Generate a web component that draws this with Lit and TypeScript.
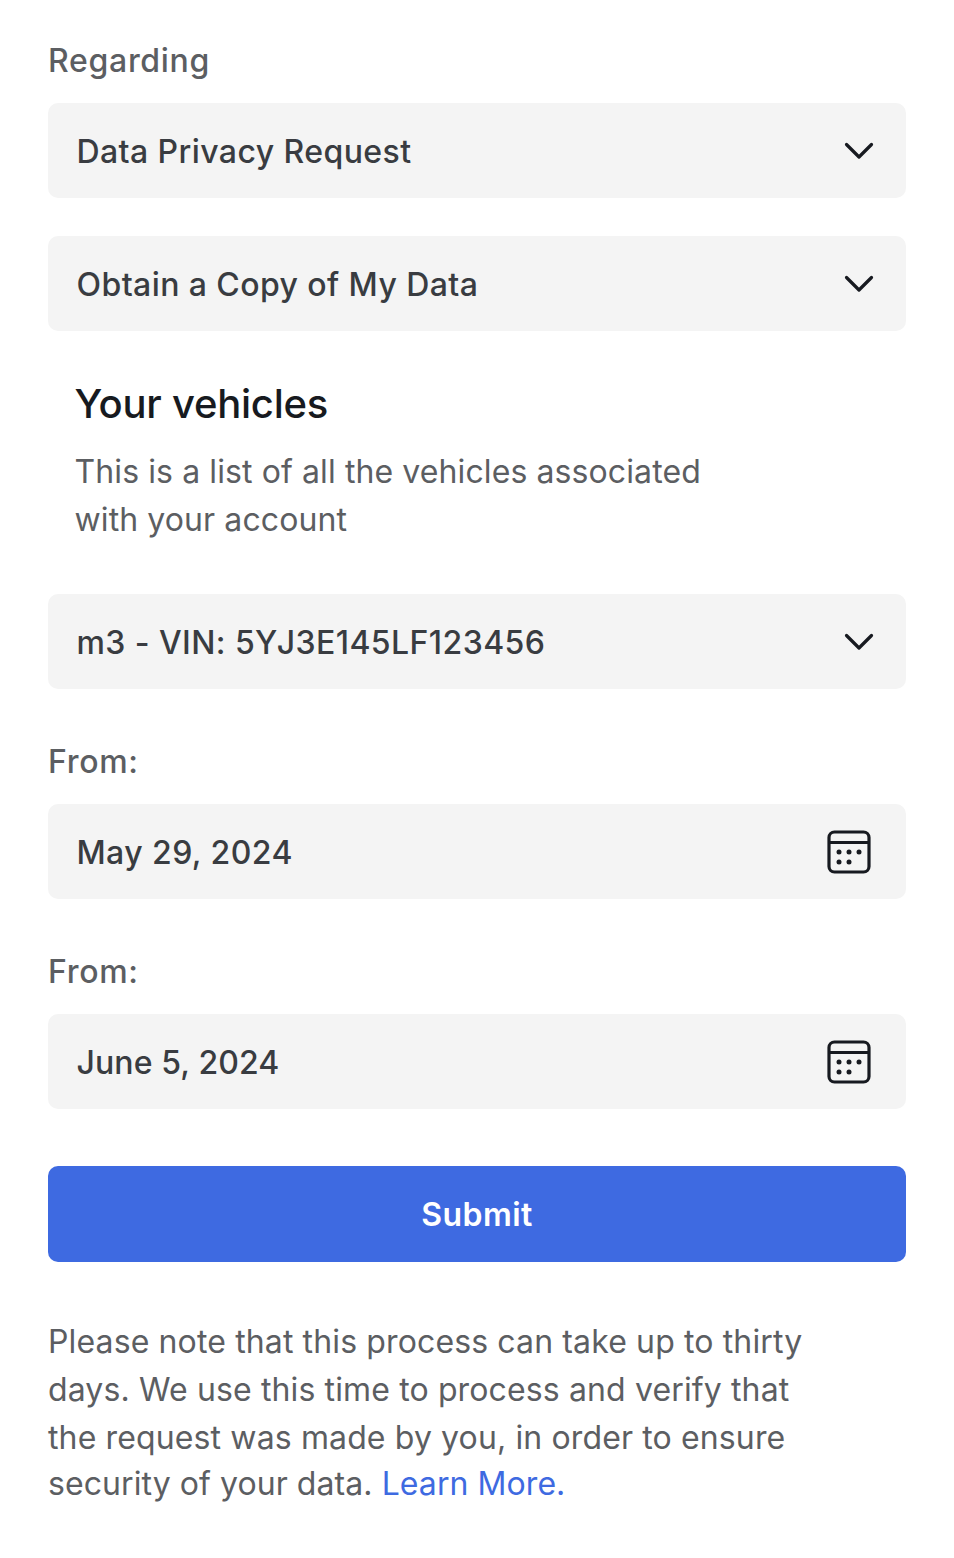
import { LitElement, html, css } from "lit";
import { customElement } from "lit/decorators.js";

const chevron = html`<svg class="chev" width="32" height="20" viewBox="0 0 32 20" fill="none"><path d="M3.5 3.5 L16 16 L28.5 3.5" stroke="#171a20" stroke-width="3.2" stroke-linecap="round" stroke-linejoin="round"/></svg>`;
const cal = html`<svg class="cal" width="44" height="44" viewBox="0 0 44 44" fill="none"><rect x="2" y="2" width="40" height="40" rx="5.5" stroke="#171a20" stroke-width="3.2"/><path d="M2 12.5H42" stroke="#171a20" stroke-width="3.2"/><g fill="#171a20"><circle cx="12" cy="22" r="2.5"/><circle cx="22" cy="22" r="2.5"/><circle cx="32" cy="22" r="2.5"/><circle cx="12" cy="32" r="2.5"/><circle cx="22" cy="32" r="2.5"/></g></svg>`;

@customElement("app-root")
export class AppRoot extends LitElement {
  static styles = css`
    :host { display: block; width: 954px; height: 1558px; background: #fff; font-family: Inter, "Noto Sans", sans-serif; box-sizing: border-box; padding: 37px 48px 0; overflow: hidden; }
    .label { font-size: 32px; line-height: 48px; font-weight: 500; color: #5c5e62; letter-spacing: 0.7px; }
    .field { height: 95px; box-sizing: border-box; background: #f4f4f4; border-radius: 10px; display: flex; align-items: center; justify-content: space-between; padding: 2px 31.5px 0 28.5px; font-size: 32px; font-weight: 500; color: #393c41; letter-spacing: 0.42px; }
    .field svg { margin-top: -2px; }
    .first { margin-top: 18px; }
    .second { margin-top: 38px; }
    .date { padding-right: 35px; }
    .tight { letter-spacing: 0.1px; }
    .intro { padding: 0 26.5px; margin-top: 49px; }
    h2 { margin: 0; font-size: 40px; line-height: 48px; font-weight: 500; color: #171a20; letter-spacing: -0.25px; }
    .intro p { margin: 20px 0 0; font-size: 32px; line-height: 48px; color: #5c5e62; width: 680px; letter-spacing: 0.1px; }
    .vehicle { margin-top: 50px; }
    .from { margin-top: 49px; margin-bottom: 18px; }
    .submit { display: flex; align-items: center; justify-content: center; width: 100%; height: 96px; margin-top: 57px; background: #3e6ae1; color: #fff; border: 0; border-radius: 10px; font: 600 32px Inter, sans-serif; letter-spacing: 0.4px; }
    .note { margin: 56px 0 0; width: 790px; font-size: 32px; line-height: 48px; color: #5c5e62; letter-spacing: 0.13px; }
    .last { display: block; margin-top: -2px; letter-spacing: 0.07px; }
    a { color: #3e6ae1; text-decoration: none; }
  `;
  render() {
    return html`
      <div class="label">Regarding</div>
      <div class="field first"><span>Data Privacy Request</span>${chevron}</div>
      <div class="field second"><span>Obtain a Copy of My Data</span>${chevron}</div>
      <div class="intro">
        <h2>Your vehicles</h2>
        <p>This is a list of all the vehicles associated with your account</p>
      </div>
      <div class="field vehicle"><span>m3 - VIN: 5YJ3E145LF123456</span>${chevron}</div>
      <div class="label from">From:</div>
      <div class="field date"><span>May 29, 2024</span>${cal}</div>
      <div class="label from">From:</div>
      <div class="field date"><span class="tight">June 5, 2024</span>${cal}</div>
      <button class="submit">Submit</button>
      <p class="note">Please note that this process can take up to thirty days. We use this time to process and verify that the request was made by you, in order to ensure <span class="last">security of your data. <a href="#">Learn More.</a></span></p>
    `;
  }
}
